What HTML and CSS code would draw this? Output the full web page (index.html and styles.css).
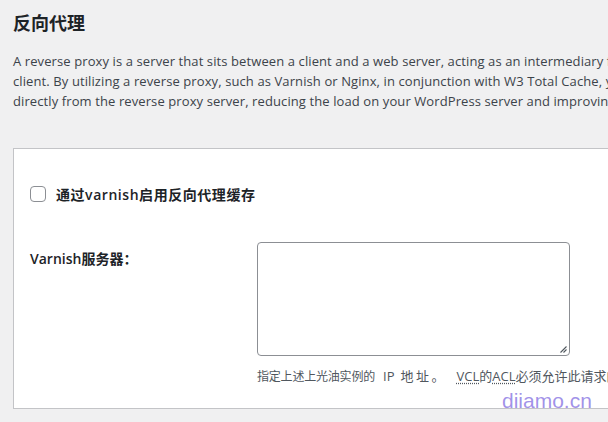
FILE: index.html
```html
<!DOCTYPE html>
<html lang="zh-CN">
<head>
<meta charset="utf-8">
<title>反向代理</title>
<link rel="stylesheet" href="styles.css">
</head>
<body>
<div class="page">
  <h2 class="title">反向代理</h2>
  <p class="intro">A reverse proxy is a server that sits between a client and a web server, acting as an intermediary for requests. It retrieves content from the server and delivers it to the<br>client. By utilizing a reverse proxy, such as Varnish or Nginx, in conjunction with W3 Total Cache, you can further enhance the performance of your website by serving cached content<br>directly from the reverse proxy server, reducing the load on your WordPress server and improving response times for your visitors.</p>
  <div class="card">
    <label class="check-row">
      <span class="checkbox"></span>
      <span class="check-label">通过varnish启用反向代理缓存</span>
    </label>
    <div class="field-row">
      <div class="field-label">Varnish服务器：</div>
      <div class="field-body">
        <div class="textarea"><svg class="grip" width="8" height="8" viewBox="0 0 8 8"><path d="M7.5 1.5 L1.5 7.5 M7.5 4.5 L4.5 7.5" stroke="#50575e" stroke-width="1.1" fill="none"/></svg></div>
        <p class="desc"><span class="narrow">指定上述上光油实例的</span><span class="ip">IP</span><span class="wide">地址</span><span class="dot">。</span><abbr>VCL</abbr>的<abbr>ACL</abbr>必须允许此请求的地址。</p>
      </div>
    </div>
  </div>
</div>
<div class="watermark">diiamo.cn</div>
</body>
</html>
```
FILE: styles.css
```css
html, body {
  margin: 0;
  padding: 0;
  background: #f0f0f1;
  overflow: hidden;
  width: 608px;
  height: 422px;
}
body {
  font-family: "Open Sans", "Noto Sans CJK SC", sans-serif;
  color: #3c434a;
  position: relative;
}
.page {
  padding: 0 0 0 13px;
  white-space: nowrap;
}
.title {
  margin: 0;
  padding-top: 10px;
  font-size: 18px;
  line-height: 24px;
  font-weight: 700;
  color: #1d2327;
  font-family: "Noto Sans CJK SC", sans-serif;
}
.intro {
  margin: 17px 0 0;
  font-size: 13px;
  line-height: 20px;
  letter-spacing: 0.1px;
  color: #3c434a;
}
.card {
  margin-top: 37px;
  width: 900px;
  height: 261px;
  background: #fff;
  border: 1px solid #c3c4c7;
  box-sizing: border-box;
  padding: 36px 0 0 16px;
}
.check-row {
  display: flex;
  align-items: center;
  gap: 10px;
  height: 18px;
}
.checkbox {
  width: 16px;
  height: 16px;
  box-sizing: border-box;
  border: 1px solid #8c8f94;
  border-radius: 4px;
  background: #fff;
}
.check-label {
  font-size: 14px;
  font-weight: 600;
  letter-spacing: 0.55px;
  color: #1d2327;
}
.field-row {
  display: flex;
  margin-top: 39px;
}
.field-label {
  width: 227px;
  padding-top: 6px;
  font-size: 14px;
  font-weight: 600;
  color: #1d2327;
}
.field-body {
  display: flex;
  flex-direction: column;
}
.textarea {
  width: 313px;
  height: 114px;
  box-sizing: border-box;
  border: 1px solid #8c8f94;
  border-radius: 4px;
  background: #fff;
  display: flex;
  justify-content: flex-end;
  align-items: flex-end;
  padding: 0 2px 2px 0;
}
.desc {
  margin: 11px 0 0;
  font-size: 13px;
  line-height: 18px;
  color: #50575e;
}
.narrow {
  font-size: 12px;
  letter-spacing: -0.2px;
}
.ip {
  margin: 0 6px 0 8px;
}
.wide {
  letter-spacing: 2.5px;
}
.dot {
  margin-right: 12px;
}
abbr {
  text-decoration: underline dotted;
  text-underline-offset: 2px;
}
.watermark {
  position: absolute;
  left: 502px;
  top: 389px;
  font-family: "Liberation Sans", sans-serif;
  font-size: 21px;
  color: rgba(130, 110, 225, 0.75);
}
```
